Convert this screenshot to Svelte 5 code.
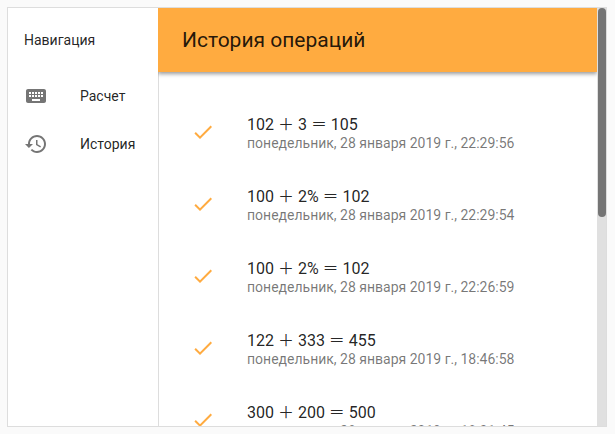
<script>
  const links = [
    { id: 'calc', label: 'Расчет' },
    { id: 'history', label: 'История' },
  ];

  const operations = [
    { text: '102 ＋ 3 ＝ 105', date: 'понедельник, 28 января 2019 г., 22:29:56' },
    { text: '100 ＋ 2% ＝ 102', date: 'понедельник, 28 января 2019 г., 22:29:54' },
    { text: '100 ＋ 2% ＝ 102', date: 'понедельник, 28 января 2019 г., 22:26:59' },
    { text: '122 ＋ 333 ＝ 455', date: 'понедельник, 28 января 2019 г., 18:46:58' },
    { text: '300 ＋ 200 ＝ 500', date: 'понедельник, 28 января 2019 г., 18:31:45' },
  ];
</script>

<div class="page">
  <div class="frame">
    <nav class="drawer" aria-labelledby="nav-title">
      <h2 id="nav-title">Навигация</h2>
      {#each links as link (link.id)}
        <a href="#{link.id}">
          <svg viewBox="0 0 24 24" aria-hidden="true">
            {#if link.id === 'calc'}
              <path d="M20 5H4c-1.1 0-1.99.9-1.99 2L2 17c0 1.1.9 2 2 2h16c1.1 0 2-.9 2-2V7c0-1.1-.9-2-2-2zm-9 3h2v2h-2V8zm0 3h2v2h-2v-2zM8 8h2v2H8V8zm0 3h2v2H8v-2zm-1 2H5v-2h2v2zm0-3H5V8h2v2zm9 7H8v-2h8v2zm0-4h-2v-2h2v2zm0-3h-2V8h2v2zm3 3h-2v-2h2v2zm0-3h-2V8h2v2z" />
            {:else}
              <path d="M13 3c-4.97 0-9 4.03-9 9H1l3.89 3.89.07.14L9 12H6c0-3.87 3.13-7 7-7s7 3.13 7 7-3.13 7-7 7c-1.93 0-3.68-.79-4.94-2.06l-1.42 1.42C8.27 19.99 10.51 21 13 21c4.97 0 9-4.03 9-9s-4.03-9-9-9zm-1 5v5l4.28 2.54.72-1.21-3.5-2.08V8H12z" />
            {/if}
          </svg>
          <span>{link.label}</span>
        </a>
      {/each}
    </nav>

    <main>
      <header><h1>История операций</h1></header>
      <ul>
        {#each operations as op}
          <li>
            <svg viewBox="0 0 24 24" aria-hidden="true">
              <path d="M9 16.17L4.83 12l-1.42 1.41L9 19 21 7l-1.41-1.41z" />
            </svg>
            <div class="entry">
              <span class="primary">{op.text}</span>
              <span class="secondary">{op.date}</span>
            </div>
          </li>
        {/each}
      </ul>
    </main>

    <div class="track" aria-hidden="true"><div class="thumb"></div></div>
  </div>
</div>

<style>
  :global(body) {
    margin: 0;
    background: #fafafa;
  }

  .page {
    box-sizing: border-box;
    height: 100vh;
    padding: 7px 8px 7px 7px;
    font-family: Roboto, 'Noto Sans CJK JP', sans-serif;
    color: rgba(0, 0, 0, 0.87);
  }

  .frame {
    box-sizing: border-box;
    display: flex;
    height: 100%;
    border: 1px solid #ddd;
    background: #fff;
    overflow: hidden;
  }

  .drawer {
    flex: none;
    width: 150px;
  }

  .drawer h2 {
    margin: 0;
    padding: 0 16px;
    font-size: 14px;
    font-weight: 400;
    line-height: 64px;
  }

  .drawer a {
    display: flex;
    align-items: center;
    gap: 32px;
    height: 48px;
    padding: 0 16px;
    color: inherit;
    font-size: 14px;
    line-height: 22px;
    text-decoration: none;
  }

  svg {
    flex: none;
    width: 24px;
    height: 24px;
    fill: #757575;
  }

  main {
    flex: 1;
    min-width: 0;
    overflow: hidden;
    display: flex;
    flex-direction: column;
  }

  header {
    flex: none;
    padding: 0 24px;
    background: #ffab40;
    box-shadow: 0 2px 4px rgba(0, 0, 0, 0.4);
    z-index: 1;
  }

  h1 {
    margin: 0;
    font-size: 21px;
    font-weight: 400;
    line-height: 64px;
  }

  ul {
    flex: 1;
    min-height: 0;
    margin: 0;
    padding: 24px 32px 0;
    border-left: 1px solid #ddd;
    list-style: none;
  }

  li {
    display: flex;
    align-items: center;
    gap: 32px;
    height: 72px;
  }

  li svg {
    fill: #ffab40;
  }

  .entry {
    min-width: 0;
    padding-top: 4px;
    white-space: nowrap;
  }

  .primary,
  .secondary {
    display: block;
    line-height: 18px;
  }

  .primary {
    font-size: 16px;
  }

  .secondary {
    color: rgba(0, 0, 0, 0.54);
    font-size: 14px;
  }

  .track {
    flex: none;
    width: 8px;
    padding-left: 1px;
    background: #e0e0e0;
  }

  .thumb {
    height: 50%;
    border-radius: 4px;
    background: #757575;
  }
</style>
